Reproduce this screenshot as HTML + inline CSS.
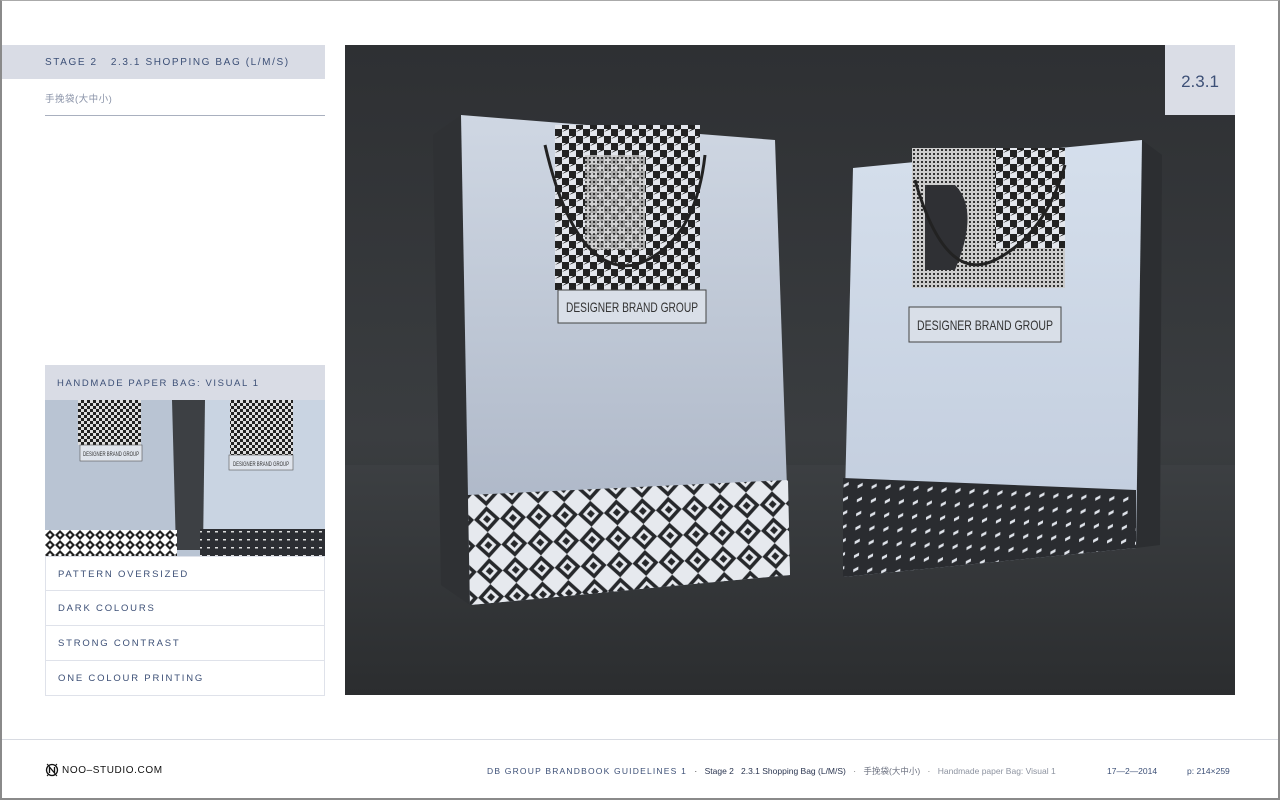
<!DOCTYPE html>
<html><head><meta charset="utf-8"><style>
*{margin:0;padding:0;box-sizing:border-box}
body{width:1280px;height:800px;background:#fff;position:relative;overflow:hidden;font-family:"Liberation Sans","Noto Sans CJK SC",sans-serif}
.frame{position:absolute;inset:0;border:2px solid #8a8a8a;border-top:1px solid #aaa}
.t{position:absolute;color:#3d5077;letter-spacing:1.6px;font-size:10px}
.hdr{position:absolute;left:2px;top:45px;width:323px;height:34px;background:#d9dce5}
.row{position:absolute;left:45px;width:280px;height:35px;border:1px solid #dfe2ea;border-top:none;background:#fff}
.row span{position:absolute;left:12px;top:12px;font-size:9.5px;letter-spacing:1.8px;color:#3d5077}
</style></head><body>
<div class="frame"></div>
<div class="hdr"></div>
<div class="t" style="left:45px;top:57px">STAGE 2&nbsp;&nbsp;&nbsp;2.3.1 SHOPPING BAG (L/M/S)</div>
<div class="t" style="left:45px;top:91px;color:#8a93a8;font-size:9.5px;letter-spacing:0.5px">手挽袋(大中小)</div>
<div style="position:absolute;left:45px;top:115px;width:280px;height:1px;background:#a9b0bf"></div>

<div style="position:absolute;left:45px;top:365px;width:280px;height:35px;background:#d9dce5"></div>
<div class="t" style="left:57px;top:378px;font-size:9.5px">HANDMADE PAPER BAG: VISUAL 1</div>
<svg style="position:absolute;left:45px;top:400px" width="280" height="156">
<defs>
<pattern id="dm" width="10" height="10" patternUnits="userSpaceOnUse"><rect width="10" height="10" fill="#fff"/><path d="M5 0L10 5L5 10L0 5Z" fill="#222"/><path d="M5 3L7 5L5 7L3 5Z" fill="#fff"/></pattern>
<pattern id="dt" width="8" height="8" patternUnits="userSpaceOnUse"><rect width="8" height="8" fill="#2c2e33"/><rect x="2" y="3" width="3" height="1.5" fill="#ddd"/></pattern>
<pattern id="hs" width="6" height="6" patternUnits="userSpaceOnUse"><rect width="6" height="6" fill="#ddd"/><path d="M0 0h3v3h-3zM3 3h3v3h-3z" fill="#222"/></pattern>
</defs>
<rect width="280" height="156" fill="#b9c4d3"/>
<rect x="155" y="0" width="125" height="156" fill="#c9d4e2"/>
<path d="M127 0h33l-2 150h-27z" fill="#3d4044"/>
<rect x="0" y="130" width="132" height="26" fill="url(#dm)"/>
<rect x="155" y="129" width="125" height="27" fill="url(#dt)"/>
<rect x="33" y="0" width="63" height="45" fill="url(#hs)"/>
<rect x="35" y="45" width="62" height="16" fill="#dfe4ec" stroke="#555" stroke-width=".6"/>
<text x="38" y="56" font-size="6" textLength="56" lengthAdjust="spacingAndGlyphs" fill="#333" font-family="Liberation Sans">DESIGNER BRAND GROUP</text>
<rect x="185" y="0" width="63" height="55" fill="url(#hs)"/>
<rect x="184" y="55" width="64" height="15" fill="#dfe4ec" stroke="#555" stroke-width=".6"/>
<text x="188" y="66" font-size="6" textLength="56" lengthAdjust="spacingAndGlyphs" fill="#333" font-family="Liberation Sans">DESIGNER BRAND GROUP</text>
</svg>
<div class="row" style="top:556px;border-top:1px solid #dfe2ea"><span>PATTERN OVERSIZED</span></div>
<div class="row" style="top:591px"><span>DARK COLOURS</span></div>
<div class="row" style="top:626px"><span>STRONG CONTRAST</span></div>
<div class="row" style="top:661px"><span>ONE COLOUR PRINTING</span></div>

<svg style="position:absolute;left:345px;top:45px" width="890" height="650">
<defs>
<linearGradient id="bg" x1="0" y1="0" x2="0" y2="1"><stop offset="0" stop-color="#2e3033"/><stop offset=".6" stop-color="#3a3d40"/><stop offset="1" stop-color="#2c2e30"/></linearGradient>
<linearGradient id="fl" x1="0" y1="0" x2="0" y2="1"><stop offset="0" stop-color="#3c3f42"/><stop offset="1" stop-color="#2b2d2f"/></linearGradient>
<linearGradient id="f1" x1="0" y1="0" x2="0" y2="1"><stop offset="0" stop-color="#cfd7e3"/><stop offset="1" stop-color="#a7b1c2"/></linearGradient>
<linearGradient id="f2" x1="0" y1="0" x2="0" y2="1"><stop offset="0" stop-color="#d5dfec"/><stop offset="1" stop-color="#c0cbdc"/></linearGradient>
<pattern id="DM" width="26" height="26" patternUnits="userSpaceOnUse" patternTransform="rotate(-3)"><rect width="26" height="26" fill="#e6e9ee"/><path d="M13 0L26 13L13 26L0 13Z" fill="#26282b"/><path d="M13 5L21 13L13 21L5 13Z" fill="#e6e9ee"/><path d="M13 9L17 13L13 17L9 13Z" fill="#26282b"/></pattern>
<pattern id="DT" width="14" height="14" patternUnits="userSpaceOnUse" patternTransform="rotate(3)"><rect width="14" height="14" fill="#2a2c30"/><path d="M3 7l5-3v3l-5 3z" fill="#dfe3ea"/></pattern>
<pattern id="HS" width="14" height="14" patternUnits="userSpaceOnUse"><rect width="14" height="14" fill="#e3e6ec"/><path d="M0 0h7v7h-7zM7 7h7v7h-7zM7 3l4-3h3zM0 10l4-3h3z" fill="#222"/></pattern>
<pattern id="GR" width="4" height="4" patternUnits="userSpaceOnUse"><rect width="4" height="4" fill="#ccc"/><rect width="2" height="2" fill="#333"/></pattern>
</defs>
<rect width="890" height="650" fill="url(#bg)"/>
<rect y="420" width="890" height="230" fill="url(#fl)"/>
<path d="M88 90L116 70L125 560L96 540Z" fill="#2f3134"/>
<path d="M116 70L430 95L445 530L125 560Z" fill="url(#f1)"/>
<path d="M123 450L443 435L445 530L125 560Z" fill="url(#DM)"/>
<rect x="210" y="80" width="145" height="165" fill="url(#HS)"/>
<rect x="240" y="110" width="60" height="95" fill="url(#GR)" opacity=".8"/>
<path d="M200 100Q230 230 290 220Q350 200 360 110" fill="none" stroke="#222" stroke-width="3"/>
<rect x="213" y="245" width="148" height="33" fill="#d9dfe8" stroke="#444"/>
<text x="221" y="267" font-size="14" textLength="132" lengthAdjust="spacingAndGlyphs" fill="#333" font-family="Liberation Sans">DESIGNER BRAND GROUP</text>
<path d="M797 95L817 110L815 500L791 503Z" fill="#2c2e31"/>
<path d="M508 123L797 95L791 503L498 532Z" fill="url(#f2)"/>
<path d="M498 433L791 445L791 503L498 532Z" fill="url(#DT)"/>
<rect x="567" y="103" width="153" height="140" fill="url(#GR)"/>
<rect x="650" y="103" width="70" height="100" fill="url(#HS)"/>
<path d="M580 140h30q25 25 0 85h-30z" fill="#2f3034"/>
<path d="M570 135Q600 240 650 215Q700 190 720 120" fill="none" stroke="#222" stroke-width="3"/>
<rect x="564" y="262" width="152" height="35" fill="#d9dfe8" stroke="#444"/>
<text x="572" y="285" font-size="14" textLength="136" lengthAdjust="spacingAndGlyphs" fill="#333" font-family="Liberation Sans">DESIGNER BRAND GROUP</text>
<rect x="820" y="0" width="70" height="70" fill="#dadde6"/>
<text x="855" y="42" font-size="17" text-anchor="middle" fill="#3d5077" font-family="Liberation Sans">2.3.1</text>
</svg>

<div style="position:absolute;left:2px;top:739px;width:1276px;height:1px;background:#d8dbe2"></div>
<svg style="position:absolute;left:45px;top:763px" width="14" height="14"><circle cx="7" cy="7" r="5.5" fill="none" stroke="#111" stroke-width="1.3"/><path d="M4.5 10V4l5 6V4" fill="none" stroke="#111" stroke-width="1.3"/><path d="M2 1l2 2M12 1l-2 2M2 13l2-2M12 13l-2-2" stroke="#111"/></svg>
<div style="position:absolute;left:62px;top:765px;font-size:10px;letter-spacing:.6px;color:#111">NOO–STUDIO.COM</div>
<div style="position:absolute;left:487px;top:765px;font-size:8.5px;color:#3d5077;white-space:nowrap">
<span style="letter-spacing:1.2px">DB GROUP BRANDBOOK GUIDELINES 1</span>
<span style="color:#333;margin-left:5px">·</span>
<span style="color:#2a3550;margin-left:5px">Stage 2&nbsp;&nbsp; 2.3.1 Shopping Bag (L/M/S)</span>
<span style="color:#777;margin-left:5px">·</span>
<span style="color:#6c7180;margin-left:5px">手挽袋(大中小)</span>
<span style="color:#777;margin-left:5px">·</span>
<span style="color:#8d93a0;margin-left:5px">Handmade paper Bag: Visual 1</span>
</div>
<div style="position:absolute;left:1107px;top:766px;font-size:8.5px;color:#3d5077">17—2—2014</div>
<div style="position:absolute;left:1187px;top:766px;font-size:8.5px;color:#3d5077">p: 214×259</div>
</body></html>
